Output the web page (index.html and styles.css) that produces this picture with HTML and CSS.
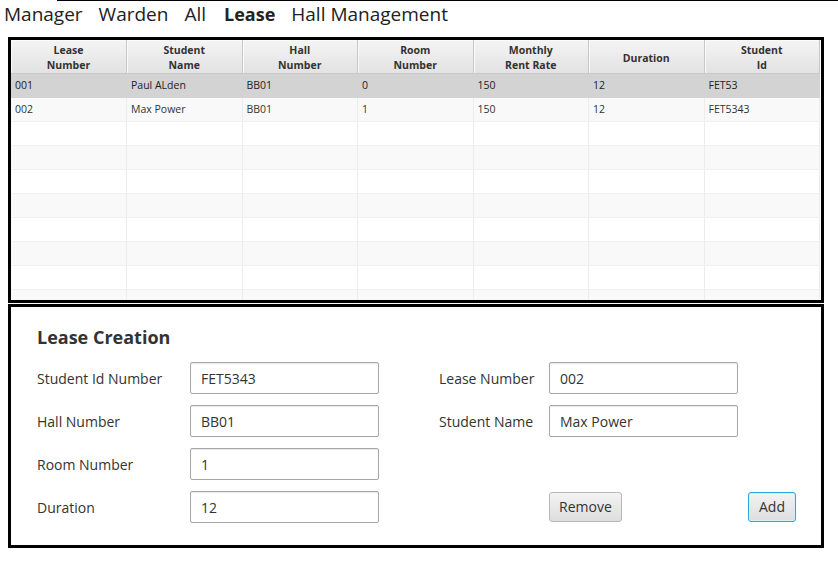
FILE: index.html
```html
<!DOCTYPE html>
<html>
<head>
<meta charset="utf-8">
<link rel="stylesheet" href="styles.css">
</head>
<body>
<div class="topline"></div>
<nav class="tabs">
  <span class="tab">Manager</span>
  <span class="tab">Warden</span>
  <span class="tab">All</span>
  <span class="tab active">Lease</span>
  <span class="tab">Hall Management</span>
</nav>
<div class="table-box">
  <table class="grid">
    <thead>
      <tr>
        <th>Lease<br>Number</th>
        <th>Student<br>Name</th>
        <th>Hall<br>Number</th>
        <th>Room<br>Number</th>
        <th>Monthly<br>Rent Rate</th>
        <th>Duration</th>
        <th>Student<br>Id</th>
      </tr>
    </thead>
    <tbody>
      <tr class="selected"><td>001</td><td>Paul ALden</td><td>BB01</td><td>0</td><td>150</td><td>12</td><td>FET53</td></tr>
      <tr><td>002</td><td>Max Power</td><td>BB01</td><td>1</td><td>150</td><td>12</td><td>FET5343</td></tr>
      <tr><td></td><td></td><td></td><td></td><td></td><td></td><td></td></tr>
      <tr><td></td><td></td><td></td><td></td><td></td><td></td><td></td></tr>
      <tr><td></td><td></td><td></td><td></td><td></td><td></td><td></td></tr>
      <tr><td></td><td></td><td></td><td></td><td></td><td></td><td></td></tr>
      <tr><td></td><td></td><td></td><td></td><td></td><td></td><td></td></tr>
      <tr><td></td><td></td><td></td><td></td><td></td><td></td><td></td></tr>
      <tr><td></td><td></td><td></td><td></td><td></td><td></td><td></td></tr>
      <tr><td></td><td></td><td></td><td></td><td></td><td></td><td></td></tr>
    </tbody>
  </table>
</div>
<div class="form-box">
  <h2 class="form-title">Lease Creation</h2>
  <div class="form-grid">
    <label class="lbl c1">Student Id Number</label>
    <div class="field c2">FET5343</div>
    <label class="lbl c4">Lease Number</label>
    <div class="field c5">002</div>

    <label class="lbl c1">Hall Number</label>
    <div class="field c2">BB01</div>
    <label class="lbl c4">Student Name</label>
    <div class="field c5">Max Power</div>

    <label class="lbl c1">Room Number</label>
    <div class="field c2">1</div>

    <label class="lbl c1 r4">Duration</label>
    <div class="field c2 r4">12</div>
    <div class="actions r4">
      <button class="btn">Remove</button>
      <button class="btn focused">Add</button>
    </div>
  </div>
</div>
</body>
</html>
```

FILE: styles.css
```css
* { box-sizing: border-box; }
html, body { margin: 0; padding: 0; background: #fff; }
body {
  font-family: "Open Sans", "Noto Sans", sans-serif;
  color: #333;
  width: 838px;
  height: 564px;
  overflow: hidden;
}
.topline {
  height: 1px;
  margin-left: 57px;
  background: #000;
}
.tabs {
  display: flex;
  align-items: center;
  gap: 16px;
  height: 36px;
  padding: 0 0 11px 4px;
  font-size: 19px;
  color: #222;
}
.tab.active { font-weight: 700; font-size: 18px; margin-left: 2px; }

.table-box {
  margin-left: 8px;
  width: 816px;
  height: 266px;
  border: 3px solid #000;
  overflow: hidden;
  background: #fff;
}
.grid {
  width: 809px;
  border-collapse: collapse;
  table-layout: fixed;
  font-size: 10.5px;
}
.grid th {
  height: 33px;
  padding: 3px 0 0;
  font-weight: 700;
  line-height: 15px;
  color: #333;
  text-align: center;
  background: linear-gradient(#f4f4f4, #e2e2e2);
  border-right: 1px solid #c8c8c8;
  border-bottom: 1px solid #c8c8c8;
  box-shadow: inset 1px 1px 0 #fafafa;
}
.grid td {
  height: 24px;
  padding: 0 4px 1px;
  color: #333;
  border-right: 1px solid #ececec;
  border-bottom: 1px solid #f0f0f0;
  white-space: nowrap;
}
.grid tbody tr { background: #fff; }
.grid tbody tr:nth-child(even) { background: #f9f9f9; }
.grid tbody tr.selected { background: #d3d3d3; }
.grid tbody tr.selected td { color: #222; border-right-color: #d3d3d3; border-bottom-color: #d3d3d3; }

.form-box {
  margin: 1px 0 0 8px;
  width: 816px;
  height: 244px;
  border: 3px solid #000;
  padding: 18px 0 0 26px;
}
.form-title {
  margin: 0 0 13px;
  font-size: 18px;
  line-height: 24px;
  font-weight: 700;
  color: #333;
}
.form-grid {
  display: grid;
  grid-template-columns: 153px 189px 60px 110px 189px 58px;
  grid-auto-rows: 32px;
  row-gap: 11px;
  font-size: 14px;
}
.lbl { align-self: center; color: #333; padding-top: 1px; }
.c1 { grid-column: 1; }
.c2 { grid-column: 2; }
.c4 { grid-column: 4; }
.c5 { grid-column: 5; }
.r4 { grid-row: 4; }
.field {
  display: flex;
  align-items: center;
  padding: 0 10px;
  border: 1px solid #a7a7a7;
  border-radius: 2px;
  background: #fff;
  box-shadow: inset 0 1px 1px #e8e8e8;
  color: #333;
}
.actions {
  grid-column: 5 / span 2;
  display: flex;
  align-items: center;
  justify-content: space-between;
}
.btn {
  height: 30px;
  padding: 0 9px 1px;
  font-family: inherit;
  font-size: 14px;
  color: #333;
  background: linear-gradient(#f3f3f3, #dedede);
  border: 1px solid #b8b8b8;
  border-radius: 3px;
}
.btn.focused {
  border-color: #2aa7dd;
  box-shadow: inset 0 0 0 1px #d6eef9;
  padding: 0 10px 1px;
}
```
